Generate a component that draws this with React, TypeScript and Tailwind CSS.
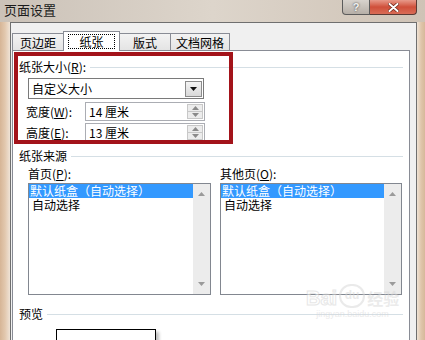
import React from "react";

const FONT = "font-['Noto_Sans_CJK_SC','Noto_Sans',sans-serif]";

function GroupHeader({ children, className }: { children: React.ReactNode; className?: string }) {
  return (
    <div className={"flex items-center h-[14px] " + (className ?? "")}>
      <span className="text-[12px] leading-[14px] whitespace-nowrap text-black">{children}</span>
      <div className="flex-1 h-px bg-[#d5dfe5] ml-[4px] mr-[6px]" />
    </div>
  );
}

function Tri({ up, color = "#6f6f6f" }: { up?: boolean; color?: string }) {
  return (
    <svg width="7" height="4" viewBox="0 0 7 4">
      <path d={up ? "M0 4 L3.5 0 L7 4 Z" : "M0 0 L7 0 L3.5 4 Z"} fill={color} />
    </svg>
  );
}

function SpinBox({ value }: { value: string }) {
  return (
    <div className="flex h-[19px] w-[120px] border border-[#abadb3] bg-white">
      <div className="flex-1 pl-[3px] text-[12px] leading-[17px]">{value}</div>
      <div className="flex flex-col w-[16px] my-[1px] mr-[1px]">
        <div className="flex-1 flex items-center justify-center border border-[#c8c8c8] bg-[#ececec]">
          <Tri up color="#8a8a8a" />
        </div>
        <div className="flex-1 flex items-center justify-center border border-t-0 border-[#c8c8c8] bg-[#ececec]">
          <Tri color="#8a8a8a" />
        </div>
      </div>
    </div>
  );
}

function ListBox() {
  return (
    <div className="flex h-[112px] border border-[#828790] bg-white">
      <div className="flex-1 text-[12px]">
        <div className="h-[14px] leading-[14px] bg-[#3399ff] text-white pl-[1px] whitespace-nowrap">
          默认纸盒（自动选择）
        </div>
        <div className="h-[14px] leading-[14px] pl-[3px]">自动选择</div>
      </div>
      <div className="w-[17px] bg-[#ececec] flex flex-col justify-between items-center pt-[8px] pb-[8px]">
        <Tri up color="#9a9a9a" />
        <Tri color="#9a9a9a" />
      </div>
    </div>
  );
}

function Tab({ label, w }: { label: string; w: string }) {
  return (
    <div
      className={
        "h-[17px] -ml-px border-t border-x border-[#898c95] bg-gradient-to-b from-[#f3f3f3] to-[#e4e4e4] flex justify-center text-[12px] leading-[14px] pt-[2px] " +
        w
      }
    >
      {label}
    </div>
  );
}

export default function App() {
  return (
    <div className={"relative w-[425px] h-[340px] overflow-hidden flex flex-col text-black " + FONT}>
      {/* title bar */}
      <div className="flex h-[22px] bg-gradient-to-r from-[#cbc2b8] via-[#ddd5cb] to-[#cfc3b6] shrink-0">
        <div className="pl-[4px] pt-[2px] text-[13px] leading-[16px] text-[#1b1b1b]">页面设置</div>
        <div className="ml-auto mr-[8px] flex h-[15px]">
          <div className="w-[28px] border border-t-0 border-[#5b5b5b] rounded-bl-[4px] bg-gradient-to-b from-[#d8d3cd] to-[#b6afa7] flex items-center justify-center">
            <span className="text-[11px] leading-none font-bold text-[#f2f2f2] font-['Liberation_Sans',sans-serif] [text-shadow:0_0_2px_#333]">?</span>
          </div>
          <div className="w-[47px] border border-l-0 border-t-0 border-[#5b3a34] rounded-br-[4px] bg-gradient-to-b from-[#e7998a] via-[#cf4f3a] to-[#d96c56] flex items-center justify-center">
            <svg width="11" height="9" viewBox="0 0 11 9">
              <path d="M1.5 1 L9.5 8 M9.5 1 L1.5 8" stroke="#6a2418" strokeWidth="3.4" strokeLinecap="round" />
              <path d="M1.5 1 L9.5 8 M9.5 1 L1.5 8" stroke="#ffffff" strokeWidth="2" strokeLinecap="round" />
            </svg>
          </div>
        </div>
      </div>

      <div className="flex flex-1 min-h-0">
        {/* left frame */}
        <div className="w-[10px] bg-gradient-to-r from-[#d6b596] via-[#e2c8ae] to-[#efe3d6]" />

        {/* client */}
        <div className="flex-1 flex flex-col border border-b-0 border-[#6f6f6f] bg-[#f0f0f0] pl-px">
          {/* tabs */}
          <div className="flex items-end pt-[8px] pl-px">
            <Tab label="页边距" w="w-[52px]" />
            <div className="relative z-10 -ml-px -mb-px h-[20px] w-[57px] border-t border-x border-[#898c95] bg-white flex justify-center pt-[2px]">
              <span className="h-[15px] px-[10px] border border-dotted border-black text-[12px] leading-[13px]">纸张</span>
            </div>
            <Tab label="版式" w="w-[52px]" />
            <Tab label="文档网格" w="w-[60px]" />
          </div>

          {/* panel */}
          <div className="relative flex-1 mr-[6px] border border-b-0 border-[#898c95] bg-white flex flex-col">
            <GroupHeader className="mt-[9px] pl-[6px]">
              纸张大小(<span className="underline">R</span>):
            </GroupHeader>

            <div className="mt-[4px] ml-[15px] w-[176px] h-[21px] border border-[#7a7a7a] bg-white flex items-center">
              <div className="flex-1 pl-[3px] text-[12px] leading-[14px]">自定义大小</div>
              <div className="w-[17px] h-[16px] mr-[1px] border border-[#8c8c8c] bg-gradient-to-b from-[#f4f4f4] to-[#d9d9d9] flex items-center justify-center">
                <Tri color="#111" />
              </div>
            </div>

            <div className="mt-[3px] ml-[13px] flex items-center">
              <span className="w-[59px] text-[12px] leading-[14px] whitespace-nowrap">
                宽度(<span className="underline">W</span>):
              </span>
              <SpinBox value="14 厘米" />
            </div>
            <div className="mt-[2px] ml-[13px] flex items-center">
              <span className="w-[59px] text-[12px] leading-[14px] whitespace-nowrap">
                高度(<span className="underline">E</span>):
              </span>
              <SpinBox value="13 厘米" />
            </div>

            <GroupHeader className="mt-[7px] pl-[6px]">纸张来源</GroupHeader>

            <div className="mt-[4px] ml-[15px] mr-[6px] flex gap-[9px]">
              <div className="w-[183px] flex flex-col">
                <span className="h-[14px] text-[12px] leading-[14px]">
                  首页(<span className="underline">P</span>):
                </span>
                <div className="mt-[2px]">
                  <ListBox />
                </div>
              </div>
              <div className="w-[182px] flex flex-col">
                <span className="h-[14px] text-[12px] leading-[14px]">
                  其他页(<span className="underline">O</span>):
                </span>
                <div className="mt-[2px]">
                  <ListBox />
                </div>
              </div>
            </div>

            <GroupHeader className="mt-[12px] pl-[6px]">预览</GroupHeader>

            <div className="mt-[8px] ml-[43px] w-[100px] h-[40px] border border-black bg-white shadow-[3px_3px_3px_rgba(0,0,0,0.25)]" />

            {/* red annotation box */}
            <div className="absolute left-[1px] top-[1px] w-[219px] h-[92px] border-[4px] border-[#a3131a]" />
          </div>
        </div>

        {/* right frame */}
        <div className="w-[8px] bg-gradient-to-r from-[#efe3d6] via-[#e0c6ab] to-[#d6b89a]" />
      </div>

      {/* watermark */}
      <div className="absolute left-[306px] top-[284px] flex flex-col items-center pointer-events-none opacity-50">
        <div className="flex items-end gap-[2px]">
          <span className="text-[20px] leading-[20px] font-bold font-['Liberation_Sans',sans-serif] [-webkit-text-stroke:1px_#d0d0d0] text-white">Bai</span>
          <span className="w-[26px] h-[24px] rounded-full border-[2px] border-[#d6d6d6] text-[12px] leading-[18px] text-center font-bold font-['Liberation_Sans',sans-serif] text-[#d6d6d6]">du</span>
          <span className="text-[16px] leading-[20px] font-bold text-[#d8d8d8]">经验</span>
        </div>
        <span className="text-[9px] leading-[11px] mt-[1px] text-[#d8d8d8] font-['Liberation_Sans',sans-serif]">jingyan.baidu.com</span>
      </div>
    </div>
  );
}
